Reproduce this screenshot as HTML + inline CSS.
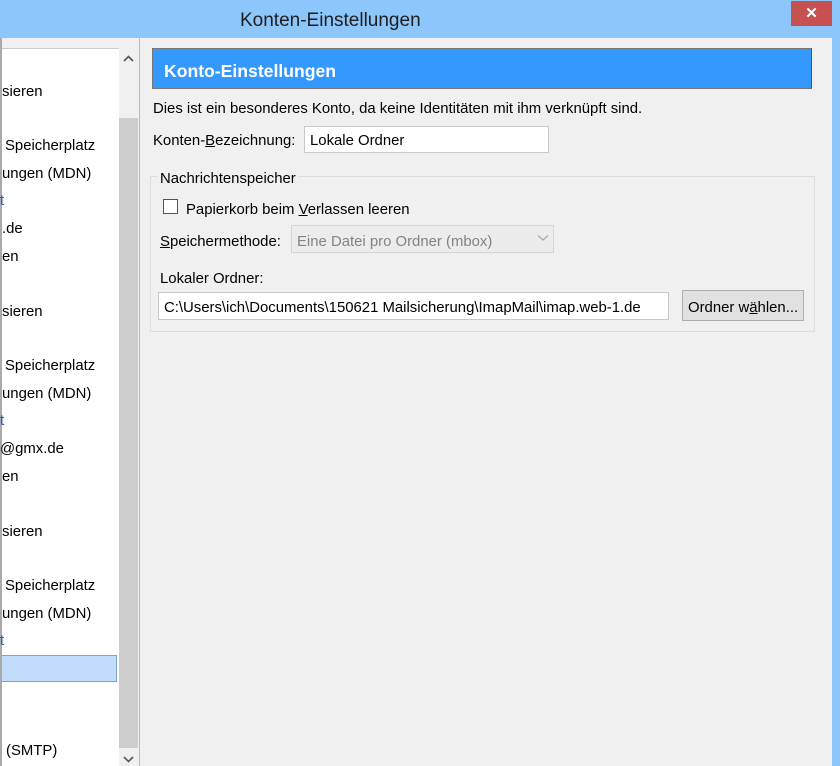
<!DOCTYPE html>
<html><head><meta charset="utf-8"><style>
*{margin:0;padding:0;box-sizing:border-box}
body{width:840px;height:766px;overflow:hidden;background:#8cc6fa;font-family:"Liberation Sans",sans-serif;font-size:14.9px;color:#000;position:relative}
.abs{position:absolute}
.t{position:absolute;white-space:nowrap;margin-top:2px}
.u{text-decoration:underline}
</style></head><body>
<div class="t" style="left:240px;top:8px;font-size:19px;color:#1e1e1e">Konten-Einstellungen</div>
<div class="abs" style="left:791px;top:1px;width:41px;height:25px;background:#c75050;color:#fff;text-align:center;font-size:15px;line-height:25px;font-weight:bold">✕</div>
<div class="abs" style="left:2px;top:38px;width:830px;height:728px;background:#f0f0f0"></div>
<div class="abs" style="left:2px;top:48px;width:117px;height:718px;background:#fff;border-top:1px solid #ccc"></div>
<div class="abs" style="left:0;top:38px;width:2px;height:728px;background:#aaa"></div>
<div class="abs" style="left:119px;top:48px;width:19px;height:718px;background:#f0f0f0"></div>
<div class="abs" style="left:119px;top:118px;width:19px;height:630px;background:#cdcdcd"></div>
<svg class="abs" style="left:123px;top:55px" width="11" height="8"><path d="M1 6 L5.5 1.5 L10 6" stroke="#555" stroke-width="1.6" fill="none"/></svg>
<svg class="abs" style="left:123px;top:755px" width="11" height="8"><path d="M1 2 L5.5 6.5 L10 2" stroke="#555" stroke-width="1.6" fill="none"/></svg>
<div class="abs" style="left:139px;top:38px;width:1px;height:728px;background:#bbb"></div>
<div class="abs" style="left:2px;top:655px;width:115px;height:27px;background:#c3dcfb;border:1px solid #7da2ce;border-left:none"></div>
<div class="t" style="left:2px;top:82px">sieren</div>
<div class="t" style="left:5px;top:136px">Speicherplatz</div>
<div class="t" style="left:2px;top:164px">ungen (MDN)</div>
<div class="t" style="left:0px;top:191px;color:#1a5ca8">t</div>
<div class="t" style="left:2px;top:219px">.de</div>
<div class="t" style="left:2px;top:247px">en</div>
<div class="t" style="left:2px;top:302px">sieren</div>
<div class="t" style="left:5px;top:356px">Speicherplatz</div>
<div class="t" style="left:2px;top:384px">ungen (MDN)</div>
<div class="t" style="left:0px;top:411px;color:#1a5ca8">t</div>
<div class="t" style="left:0px;top:439px">@gmx.de</div>
<div class="t" style="left:2px;top:467px">en</div>
<div class="t" style="left:2px;top:522px">sieren</div>
<div class="t" style="left:5px;top:576px">Speicherplatz</div>
<div class="t" style="left:2px;top:604px">ungen (MDN)</div>
<div class="t" style="left:0px;top:631px;color:#1a5ca8">t</div>
<div class="t" style="left:6px;top:741px">(SMTP)</div>
<div class="abs" style="left:152px;top:48px;width:660px;height:41px;background:#3399ff;border:1px solid #777;border-right-color:#555"></div>
<div class="t" style="left:164px;top:59px;color:#fff;font-weight:bold;font-size:17.6px">Konto-Einstellungen</div>
<div class="t" style="left:153px;top:99px">Dies ist ein besonderes Konto, da keine Identitäten mit ihm verknüpft sind.</div>
<div class="t" style="left:153px;top:131px">Konten-<span class="u">B</span>ezeichnung:</div>
<div class="abs" style="left:304px;top:126px;width:245px;height:27px;background:#fff;border:1px solid #c8c8c8"></div>
<div class="t" style="left:310px;top:131px">Lokale Ordner</div>
<div class="abs" style="left:150px;top:176px;width:665px;height:156px;border:1px solid #dcdcdc"></div>
<div class="t" style="left:157px;top:169px;background:#f0f0f0;padding:0 3px">Nachrichtenspeicher</div>
<div class="abs" style="left:163px;top:199px;width:15px;height:15px;background:#fff;border:1px solid #555"></div>
<div class="t" style="left:186px;top:200px">Papierkorb beim <span class="u">V</span>erlassen leeren</div>
<div class="t" style="left:160px;top:232px"><span class="u">S</span>peichermethode:</div>
<div class="abs" style="left:291px;top:225px;width:263px;height:28px;background:#ececec;border:1px solid #d5d5d5"></div>
<div class="t" style="left:297px;top:232px;color:#838383">Eine Datei pro Ordner (mbox)</div>
<svg class="abs" style="left:537px;top:234px" width="12" height="8"><path d="M1 1.5 L6 6 L11 1.5" stroke="#aaa" stroke-width="1.3" fill="none"/></svg>
<div class="t" style="left:160px;top:269px">Lokaler Ordner:</div>
<div class="abs" style="left:158px;top:292px;width:511px;height:28px;background:#fff;border:1px solid #c8c8c8"></div>
<div class="t" style="left:164px;top:298px">C:\Users\ich\Documents\150621 Mailsicherung\ImapMail\imap.web-1.de</div>
<div class="abs" style="left:682px;top:290px;width:122px;height:31px;background:#e1e1e1;border:1px solid #adadad"></div>
<div class="t" style="left:688px;top:298px">Ordner w<span class="u">ä</span>hlen...</div>
</body></html>
